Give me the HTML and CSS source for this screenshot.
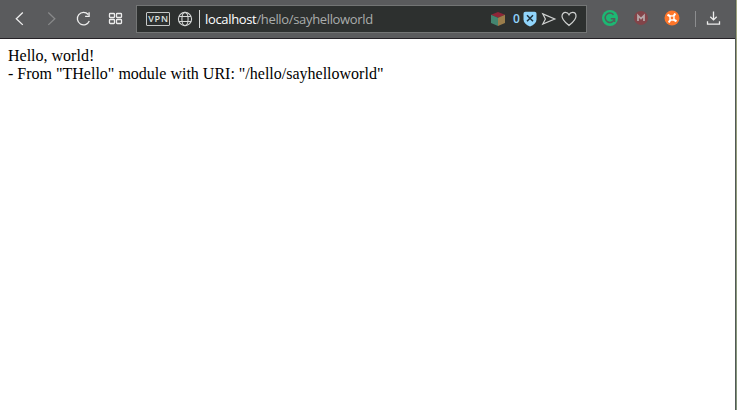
FILE: index.html
```
<!DOCTYPE html>
<html lang="en">
<head>
<meta charset="utf-8">
<title>localhost/hello/sayhelloworld</title>
<link rel="stylesheet" href="styles.css">
</head>
<body>
<div class="window">
  <header class="toolbar">
    <nav class="nav">
      <svg class="icon" width="20" height="20" viewBox="0 0 20 20"><path d="M12.800 3.500L6.300 9.700l6.500 6.200"/></svg>
      <svg class="icon dim" width="20" height="20" viewBox="0 0 20 20"><path d="M6.300 3.500l6.500 6.200-6.500 6.200"/></svg>
      <svg class="icon" width="20" height="20" viewBox="0 0 20 20"><path d="M14.200 5.500A6.200 6.200 0 1 0 15.300 12M15.100 3.300v4h-4"/></svg>
      <svg class="icon" width="20" height="20" viewBox="0 0 20 20"><rect x="3.500" y="4.500" width="5" height="4" rx=".8"/><rect x="10.500" y="4.500" width="5" height="4" rx=".8"/><rect x="3.500" y="10.500" width="5" height="4" rx=".8"/><rect x="10.500" y="10.500" width="5" height="4" rx=".8"/></svg>
    </nav>
    <div class="address">
      <span class="vpn">VPN</span>
      <svg class="globe" width="16" height="16" viewBox="0 0 16 16"><circle cx="8" cy="8" r="6.600"/><ellipse cx="8" cy="8" rx="3.100" ry="6.600"/><path d="M2 5.500h12M2 10.500h12"/></svg>
      <span class="caret"></span>
      <span class="url"><span class="host">localhost</span><span class="path">/hello/sayhelloworld</span></span>
      <div class="actions">
        <svg width="16" height="16" viewBox="0 0 16 16"><path fill="#8f2638" d="M8 1l7 2.800L8 6.700 1 3.800z"/><path fill="#438570" d="M1 3.800l7 2.900V15l-7-3z"/><path fill="#9a7d4b" d="M15 3.800L8 6.700V15l7-3z"/></svg>
        <span class="count">0</span>
        <svg class="shield" width="14" height="16" viewBox="0 0 14 16"><path fill="#91d5fc" d="M2.600.8h8.800c1.400 0 2.100.9 2.100 2.200v5.500c0 3-2.500 5.400-6.500 7C3 13.900.5 11.500.5 8.500V3C.5 1.700 1.200.8 2.600.8z"/><path fill="none" stroke="#20333e" stroke-width="1.500" d="M4 4.200l6 6M10 4.200l-6 6"/></svg>
        <svg class="line send" width="16" height="16" viewBox="0 0 16 16"><path d="M1.800 2.900L13.800 8 1.800 13.100 4.400 8z"/></svg>
        <svg class="line" width="18" height="16" viewBox="0 0 18 16"><path d="M9 14.500C6.800 12.500 2 9 2 5.200 2 3 3.600 1.400 5.400 1.400 7 1.400 8.300 2.300 9 3.800c.7-1.500 2-2.400 3.600-2.400C14.400 1.400 16 3 16 5.200c0 3.800-4.800 7.300-7 9.300z"/></svg>
      </div>
    </div>
    <div class="extensions">
      <svg width="16" height="16" viewBox="0 0 16 16"><circle cx="8" cy="8" r="8" fill="#1cb873"/><path fill="none" stroke="#50625a" stroke-width="1.500" d="M11.500 4.700A4.700 4.700 0 1 0 12.500 8.800M8.800 8.700h3.800v3.200"/></svg>
      <svg class="m-badge" width="14" height="14" viewBox="0 0 14 14"><circle cx="7" cy="7" r="7" fill="#824449"/><path fill="none" stroke="#b5a6a7" stroke-width="1.800" d="M4 10V4.600l3 3 3-3V10"/></svg>
      <svg width="16" height="16" viewBox="0 0 16 16"><circle cx="8" cy="8" r="7.500" fill="#ff7629"/><g fill="none" stroke="#fff" stroke-width="2.100"><path d="M3.500 4.800l3.200 1.700M11.200 3.500L9.500 6.500M12.500 11.200l-3.200-1.700M4.800 12.500l1.700-3"/></g><path fill="#fff" d="M8 4.800L11.200 8 8 11.200 4.800 8z"/><circle cx="8" cy="8" r="1.400" fill="#ff7629"/></svg>
      <span class="divider"></span>
      <svg class="icon download" width="16" height="16" viewBox="0 0 16 16"><path d="M7.500 1.500v8.500M4.300 6.700l3.200 3.200 3.200-3.200M1.500 11.200v3h12v-3"/></svg>
    </div>
  </header>
  <main class="page">Hello, world!<br>- From "THello" module with URI: "/hello/sayhelloworld"</main>
</div>
</body>
</html>
```
FILE: styles.css
```
* { box-sizing: border-box; }
body { margin: 0; background: #fff; }
svg { display: block; flex: none; }
.window {
  width: 737px;
  height: 410px;
  padding-right: 2px;
  background:
    linear-gradient(#a0a37f, #83947b) right / 1px 100% no-repeat,
    linear-gradient(to right, #fff 735px, #515956 735px);
  overflow: hidden;
}
.toolbar {
  display: flex;
  align-items: flex-start;
  height: 39px;
  background: #5a5b5d;
  border-bottom: 1px solid #242126;
  font-family: "Open Sans", sans-serif;
}
.nav { display: flex; gap: 12px; padding: 9px 0 0 10px; width: 136px; flex: none; }
.icon { fill: none; stroke: #eee; stroke-width: 1.3; }
.dim { stroke: #88898a; }
.address {
  display: flex;
  align-items: center;
  width: 451px;
  height: 28px;
  margin-top: 5px;
  padding: 0 8px 0 9px;
  background: #2d302f;
  border: 1px solid #737575;
  flex: none;
}
.vpn {
  width: 24px;
  height: 14px;
  border: 1px solid #c5c8c7;
  border-radius: 1px;
  color: #dfe1e0;
  font-size: 9px;
  font-weight: 600;
  line-height: 12px;
  letter-spacing: .8px;
  text-align: center;
  padding-left: 1px;
}
.globe { margin-left: 7px; fill: none; stroke: #d4d6d5; stroke-width: 1.1; }
.caret { width: 1px; height: 18px; margin-left: 6px; background: #d4d6d5; }
.url { margin-left: 5px; font-size: 13px; line-height: 18px; letter-spacing: -.34px; white-space: nowrap; }
.host { color: #fff; }
.path { color: #aaadac; }
.actions { display: flex; align-items: center; margin-left: auto; }
.count { width: 8px; margin-left: 7px; color: #91d5fc; font-size: 12px; font-weight: 600; line-height: 16px; }
.shield { margin-left: 2px; }
.line { fill: none; stroke: #d0d2d1; stroke-width: 1.2; }
.send { margin-left: 4px; margin-right: 3px; }
.extensions { display: flex; align-items: center; height: 16px; margin: 10px 0 0 15px; }
.m-badge { margin: 0 16px; }
.divider { width: 1px; height: 16px; margin: 2px 10px 0 15px; background: #8c8d8f; }
.page {
  padding: 8px 8px 0;
  color: #000;
  font: 16px/18px "Liberation Serif", serif;
}
```
